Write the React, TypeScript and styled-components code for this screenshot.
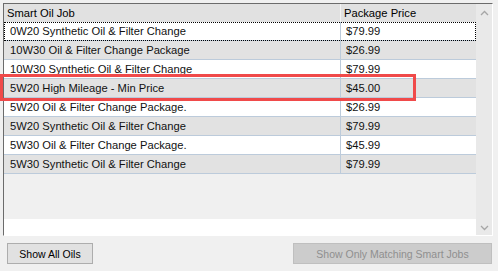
import React from "react";
import styled, { createGlobalStyle } from "styled-components";

const Global = createGlobalStyle`
  html, body { margin: 0; padding: 0; background: #f0f0f0; }
  body { font-family: "Liberation Sans", Arial, sans-serif; font-size: 11px; color: #000; }
  * { box-sizing: border-box; }
`;

const Page = styled.div`
  position: relative;
  width: 498px;
  height: 271px;
  padding: 3px 0 0 3px;
  background: #f0f0f0;
`;

const Frame = styled.div`
  width: 490px;
  height: 233px;
  display: flex;
  border-top: 1px solid #6b6b6b;
  border-left: 1px solid #6b6b6b;
  border-right: 1px solid #ffffff;
  border-bottom: 1px solid #ffffff;
`;

const Body = styled.div`
  width: 472px;
  display: flex;
  flex-direction: column;
`;

const HeaderRow = styled.div`
  display: grid;
  grid-template-columns: 336px 1fr;
  height: 18px;
  background: #e1e1e1;
`;

const HeaderCell = styled.div<{ $divider?: boolean }>`
  display: flex;
  align-items: center;
  padding-left: 3px;
  border-left: ${(p) => (p.$divider ? "1px solid #f4f4f4" : "none")};
  white-space: nowrap;
  font-size: 11.2px;
  color: #000;
`;

const Row = styled.div<{ $alt: boolean; $focused?: boolean }>`
  display: grid;
  grid-template-columns: 336px 1fr;
  height: 19px;
  background: ${(p) => (p.$alt ? "#e2e2e2" : "#ffffff")};
  border-bottom: 1px solid #bccbdb;
  outline: ${(p) => (p.$focused ? "1px dotted #000" : "none")};
  outline-offset: -1px;
`;

const Cell = styled.div<{ $divider?: boolean }>`
  display: flex;
  align-items: center;
  padding-left: ${(p) => (p.$divider ? "5px" : "6px")};
  border-left: ${(p) => (p.$divider ? "1px solid #bccbdb" : "none")};
  white-space: nowrap;
  font-size: 11.2px;
  color: #111;
`;

const Filler = styled.div`
  flex: 1;
  background: #f0f0f0;
`;

const WhiteStrip = styled.div`
  height: 16px;
  background: #ffffff;
`;

const ScrollBar = styled.div`
  width: 16px;
  background: #e9e9e9;
  display: flex;
  flex-direction: column;
  justify-content: space-between;
  align-items: center;
  padding: 6px 0 4px;
`;

const ButtonBar = styled.div`
  display: flex;
  justify-content: space-between;
  margin-top: 7px;
  padding: 0 6px 0 4px;
  width: 495px;
`;

const Button = styled.button<{ $width: number }>`
  width: ${(p) => p.$width}px;
  height: 21px;
  font-family: "Liberation Sans", Arial, sans-serif;
  font-size: 10.5px;
  padding: 0;
  background: #e1e1e1;
  border: 1px solid #adadad;
  color: #000;
  &:disabled {
    background: #cccccc;
    border-color: #bfbfbf;
    color: #8f8f8f;
  }
`;

const Annotation = styled.div`
  position: absolute;
  left: 0;
  top: 74px;
  width: 416px;
  height: 27px;
  border: 3px solid #f04a4a;
  pointer-events: none;
`;

const Chevron = ({ up }: { up?: boolean }) => (
  <svg width="9" height="6" viewBox="0 0 9 6">
    <polyline
      points={up ? "1,5 4.5,1.5 8,5" : "1,1 4.5,4.5 8,1"}
      fill="none"
      stroke="#a6a6a6"
      strokeWidth="1.3"
    />
  </svg>
);

const rows: [string, string][] = [
  ["0W20 Synthetic Oil & Filter Change", "$79.99"],
  ["10W30 Oil & Filter Change Package", "$26.99"],
  ["10W30 Synthetic Oil & Filter Change", "$79.99"],
  ["5W20 High Mileage - Min Price", "$45.00"],
  ["5W20 Oil & Filter Change Package.", "$26.99"],
  ["5W20 Synthetic Oil & Filter Change", "$79.99"],
  ["5W30 Oil & Filter Change Package.", "$45.99"],
  ["5W30 Synthetic Oil & Filter Change", "$79.99"],
];

export default function App() {
  return (
    <Page>
      <Global />
      <Frame>
        <Body>
          <HeaderRow>
            <HeaderCell>Smart Oil Job</HeaderCell>
            <HeaderCell $divider>Package Price</HeaderCell>
          </HeaderRow>
          {rows.map(([name, price], i) => (
            <Row key={name} $alt={i % 2 === 1} $focused={i === 0}>
              <Cell>{name}</Cell>
              <Cell $divider>{price}</Cell>
            </Row>
          ))}
          <Filler />
          <WhiteStrip />
        </Body>
        <ScrollBar>
          <Chevron up />
          <Chevron />
        </ScrollBar>
      </Frame>
      <ButtonBar>
        <Button $width={86}>Show All Oils</Button>
        <Button $width={199} disabled>
          Show Only Matching Smart Jobs
        </Button>
      </ButtonBar>
      <Annotation />
    </Page>
  );
}
